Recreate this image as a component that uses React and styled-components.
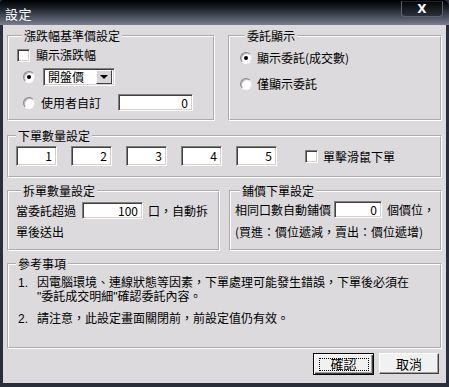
import React from "react";
import styled, { createGlobalStyle } from "styled-components";

const Global = createGlobalStyle`
  html, body {
    margin: 0;
    padding: 0;
    background: #ffffff;
  }
  * {
    box-sizing: border-box;
  }
`;

const Window = styled.div`
  width: 449px;
  height: 387px;
  background: #2a2e3b;
  display: flex;
  flex-direction: column;
  font-family: "Noto Sans CJK TC", "Liberation Sans", sans-serif;
  font-size: 12px;
  color: #000;
`;

const TitleBar = styled.div`
  height: 25px;
  flex: none;
  display: flex;
  align-items: flex-start;
  justify-content: space-between;
  background: linear-gradient(#000000 0%, #1a1d26 30%, #5a6070 80%, #7a8090 100%);
  border-top-left-radius: 4px;
  border-top-right-radius: 6px;
  padding: 0 6px 0 5px;
`;

const Title = styled.span`
  color: #fff;
  font-size: 13px;
  line-height: 14px;
  margin-top: 7px;
  letter-spacing: 0.5px;
`;

const CloseButton = styled.div`
  width: 42px;
  height: 16px;
  margin-top: 1px;
  border: 1px solid #5d6272;
  border-top-color: #20232c;
  border-radius: 0 0 4px 4px;
  background: linear-gradient(#050608, #1c1f27 60%, #2c303b);
  display: flex;
  align-items: center;
  justify-content: center;
  color: #fff;
  font-family: "DejaVu Sans", sans-serif;
  font-weight: bold;
  font-size: 12px;
  line-height: 12px;
`;

const Client = styled.div`
  flex: 1;
  margin: 0 3px 4px 3px;
  background: #dcdadc;
  padding: 4px 4px 0 4px;
  display: flex;
  flex-direction: column;
`;

const Row = styled.div`
  display: grid;
  grid-template-columns: ${({ cols }) => cols};
  column-gap: ${({ gap }) => gap}px;
  margin-top: ${({ top }) => top || 0}px;
`;

const Group = styled.fieldset`
  margin: 0;
  min-width: 0;
  height: ${({ h }) => h}px;
  border: 2px groove #ffffff;
  padding: ${({ pad }) => pad};
  display: flex;
  flex-direction: column;
`;

const Legend = styled.legend`
  padding: 0 2px;
  margin-left: 5px;
  font-size: 12px;
  line-height: 14px;
`;

const Line = styled.div`
  display: flex;
  align-items: center;
  height: ${({ h }) => h || 14}px;
  margin-top: ${({ top }) => top || 0}px;
  margin-left: ${({ indent }) => indent || 0}px;
  white-space: nowrap;
  line-height: 14px;
`;

const Box = styled.span`
  width: 13px;
  height: 13px;
  flex: none;
  background: #fff;
  border: 1px solid;
  border-color: #808080 #ffffff #ffffff #808080;
  box-shadow: inset 1px 1px 0 #404040, inset -1px -1px 0 #d4d0c8;
  margin-left: ${({ ml }) => ml || 0}px;
  margin-right: ${({ gap }) => gap}px;
`;

const Radio = styled.span`
  width: 12px;
  height: 12px;
  flex: none;
  border-radius: 50%;
  background: radial-gradient(circle at 60% 60%, #ffffff 45%, #e4e2e4 75%);
  border: 1px solid;
  border-color: #8a8a8a #e8e8e8 #ffffff #8a8a8a;
  box-shadow: inset 1px 1px 0 #b8b8b8;
  display: flex;
  align-items: center;
  justify-content: center;
  margin-right: ${({ gap }) => gap}px;
  &::after {
    content: "";
    width: 4px;
    height: 4px;
    border-radius: 50%;
    background: ${({ checked }) => (checked ? "#000" : "transparent")};
  }
`;

const Field = styled.span`
  width: ${({ w }) => w}px;
  height: ${({ h }) => h}px;
  flex: none;
  background: #fff;
  border: 1px solid;
  border-color: #808080 #ffffff #ffffff #808080;
  box-shadow: inset 1px 1px 0 #404040, inset -1px -1px 0 #d4d0c8;
  display: flex;
  align-items: center;
  justify-content: flex-end;
  padding-right: 4px;
  margin-left: ${({ ml }) => ml || 0}px;
  margin-right: ${({ mr }) => mr || 0}px;
  line-height: 12px;
`;

const Select = styled.span`
  width: 72px;
  height: 18px;
  flex: none;
  background: #fff;
  border: 1px solid;
  border-color: #808080 #ffffff #ffffff #808080;
  box-shadow: inset 1px 1px 0 #404040, inset -1px -1px 0 #d4d0c8;
  display: flex;
  align-items: center;
  justify-content: space-between;
  padding: 2px 2px 2px 4px;
`;

const ArrowButton = styled.span`
  width: 16px;
  height: 14px;
  background: #d8d6d8;
  border: 1px solid;
  border-color: #ffffff #404040 #404040 #ffffff;
  display: flex;
  align-items: center;
  justify-content: center;
  &::after {
    content: "";
    border-left: 4px solid transparent;
    border-right: 4px solid transparent;
    border-top: 4px solid #000;
  }
`;

const QtyRow = styled.div`
  display: flex;
  align-items: center;
  margin-top: 3px;
  margin-left: 5px;
`;

// Latin face first keeps each line's text box short, CJK glyphs fall back
const Notes = styled.div`
  display: grid;
  grid-template-columns: 19px 1fr;
  font-family: "Liberation Sans", "Noto Sans CJK TC", sans-serif;
  line-height: 14px;
  margin-top: 5px;
  margin-left: 7px;
`;

const Num = styled.span`
  grid-column: 1;
`;

const NoteText = styled.span`
  grid-column: 2;
  margin-bottom: ${({ mb }) => mb || 0}px;
`;

const Buttons = styled.div`
  display: flex;
  justify-content: flex-end;
  gap: 5px;
  margin-top: 4px;
  padding-right: 3px;
`;

const Button = styled.div`
  width: ${({ w }) => w}px;
  height: ${({ h }) => h}px;
  background: #f2f1f2;
  border: 1px solid;
  border-color: ${({ primary }) =>
    primary ? "#000" : "#ffffff #404040 #404040 #ffffff"};
  box-shadow: ${({ primary }) =>
    primary
      ? "inset 1px 1px 0 #fff, inset -1px -1px 0 #404040, inset -2px -2px 0 #a0a0a0"
      : "inset -1px -1px 0 #a0a0a0"};
  display: flex;
  align-items: center;
  justify-content: center;
  font-size: 13px;
  line-height: 14px;
`;

const Focus = styled.span`
  width: 50px;
  height: 13px;
  border: 1px dotted #000;
  display: flex;
  align-items: center;
  justify-content: center;
`;

export default function App() {
  return (
    <>
      <Global />
      <Window>
        <TitleBar>
          <Title>設定</Title>
          <CloseButton>X</CloseButton>
        </TitleBar>
        <Client>
          <Row cols="208px 214px" gap={13}>
            <Group h={92} pad="0 6px 0 8px">
              <Legend>漲跌幅基準價設定</Legend>
              <Line top={5}>
                <Box gap={6} />
                顯示漲跌幅
              </Line>
              <Line h={18} top={6} indent={6}>
                <Radio checked gap={8} />
                <Select>
                  開盤價
                  <ArrowButton />
                </Select>
              </Line>
              <Line h={17} top={8} indent={6}>
                <Radio gap={6} />
                使用者自訂
                <Field w={75} h={17} ml={17}>0</Field>
              </Line>
            </Group>
            <Group h={92} pad="0 6px 0 10px">
              <Legend>委託顯示</Legend>
              <Line top={8}>
                <Radio checked gap={5} />
                顯示委託(成交數)
              </Line>
              <Line top={12}>
                <Radio gap={5} />
                僅顯示委託
              </Line>
            </Group>
          </Row>
          <Row cols="435px" gap={0} top={8}>
            <Group h={49} pad="0 6px 0 2px">
              <Legend>下單數量設定</Legend>
              <QtyRow>
                {[1, 2, 3, 4, 5].map((n) => (
                  <Field key={n} w={41} h={20} mr={14}>
                    {n}
                  </Field>
                ))}
                <Box gap={5} ml={14} />
                單擊滑鼠下單
              </QtyRow>
            </Group>
          </Row>
          <Row cols="213px 213px" gap={9} top={6}>
            <Group h={67} pad="0 4px 0 7px">
              <Legend>拆單數量設定</Legend>
              <Line h={17} top={4}>
                當委託超過
                <Field w={61} h={17} ml={6} mr={5}>100</Field>
                口，自動拆
              </Line>
              <Line top={6}>單後送出</Line>
            </Group>
            <Group h={67} pad="0 4px 0 4px">
              <Legend>鋪價下單設定</Legend>
              <Line h={17} top={3}>
                相同口數自動鋪價
                <Field w={48} h={17} ml={3} mr={5}>0</Field>
                個價位，
              </Line>
              <Line top={7}>(買進：價位遞減，賣出：價位遞增)</Line>
            </Group>
          </Row>
          <Row cols="435px" gap={0} top={6}>
            <Group h={92} pad="0 6px 0 2px">
              <Legend>參考事項</Legend>
              <Notes>
                <Num>1.</Num>
                <NoteText>因電腦環境、連線狀態等因素，下單處理可能發生錯誤，下單後必須在</NoteText>
                <NoteText mb={8}>"委託成交明細"確認委託內容。</NoteText>
                <Num>2.</Num>
                <NoteText>請注意，此設定畫面關閉前，前設定值仍有效。</NoteText>
              </Notes>
            </Group>
          </Row>
          <Buttons>
            <Button primary w={61} h={22}>
              <Focus>確認</Focus>
            </Button>
            <Button w={60} h={21}>取消</Button>
          </Buttons>
        </Client>
      </Window>
    </>
  );
}
